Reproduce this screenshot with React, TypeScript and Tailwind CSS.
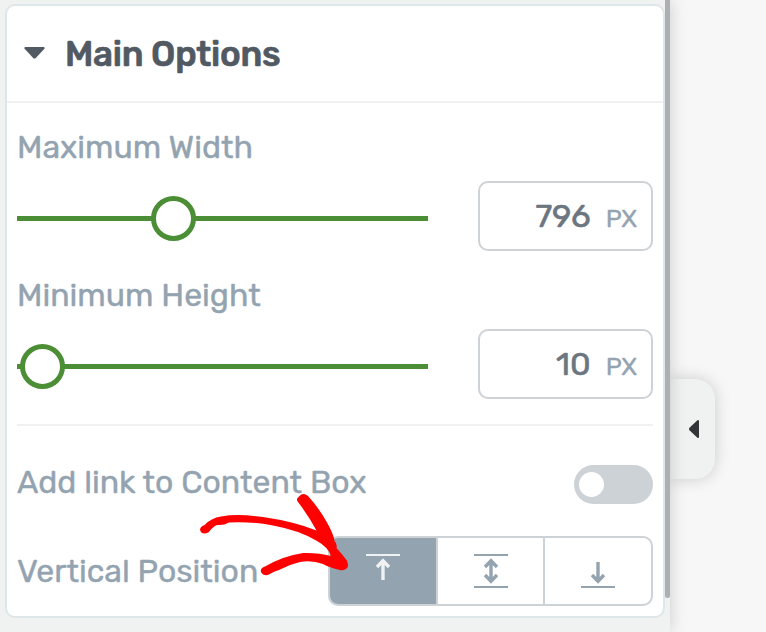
import { useState } from 'react'
import type { ReactNode } from 'react'

type VerticalPosition = 'top' | 'middle' | 'bottom'

interface SliderFieldProps {
  label: string
  value: number
  offset: number
}

function Label({ children }: { children: ReactNode }) {
  return (
    <span className="block whitespace-nowrap text-[32px] leading-10 text-[#93a3b0] [-webkit-text-stroke:0.4px_#93a3b0]">
      {children}
    </span>
  )
}

function SliderField({ label, value, offset }: SliderFieldProps) {
  return (
    <div className="pt-6">
      <Label>{label}</Label>
      <div className="mt-3.5 flex items-center justify-between">
        <div className="relative mt-1 flex h-[45px] w-[411px] items-center">
          <div className="h-[5px] w-full bg-[#4b8e36]" />
          <div
            className="absolute top-0 size-[45px] rounded-full border-[5px] border-[#4b8e36] bg-white"
            style={{ left: offset }}
          />
        </div>
        <div className="flex h-[70px] w-[175px] items-baseline justify-end rounded-[10px] border-2 border-[#cdd2d6] pr-[14px] leading-[66px]">
          <span className="mr-[15px] text-[32.5px] text-[#6b7681] [-webkit-text-stroke:0.6px_#6b7681]">{value}</span>
          <span className="text-[25px] text-[#93a3b0] [-webkit-text-stroke:0.3px_#93a3b0]">PX</span>
        </div>
      </div>
    </div>
  )
}

function PositionIcon({ position }: { position: VerticalPosition }) {
  return (
    <svg width="34" height="34" viewBox="0 0 34 34" fill="none" stroke="currentColor">
      {position !== 'bottom' && <path d="M0 1h34" strokeWidth="2" />}
      {position !== 'top' && <path d="M0 33h34" strokeWidth="2" />}
      {position === 'top' && <path d="M17 26V7M11 13l6-6.2 6 6.2" strokeWidth="3.4" />}
      {position === 'middle' && (
        <path d="M17 7v20M11 13l6-6.2 6 6.2M11 21l6 6.2 6-6.2" strokeWidth="3.4" />
      )}
      {position === 'bottom' && <path d="M17 8v19M11 21l6 6.2 6-6.2" strokeWidth="3.4" />}
    </svg>
  )
}

const positions: VerticalPosition[] = ['top', 'middle', 'bottom']

export default function App() {
  const [position, setPosition] = useState<VerticalPosition>('top')
  const [linked, setLinked] = useState(false)

  return (
    <div className="relative flex h-[632px] w-[766px] overflow-hidden bg-[#f7f7f7] font-[Rubik,Roboto,sans-serif]">
      <div className="relative z-10 flex w-[670px] shrink-0 bg-[#f0f2f1] pt-1 pl-[5px] shadow-[0_0_16px_rgba(0,0,0,0.18)]">
        <div className="h-[614px] w-[660px] rounded-[10px] border-2 border-[#dde6e8] bg-white">
          <div className="flex h-[97px] items-center border-b-2 border-[#f0f1f2] pl-[17px]">
            <svg className="-mt-px" width="21" height="12" viewBox="0 0 21 12" fill="#515962">
              <path d="M1.2 0h18.6q1.4.5.6 1.7l-8.6 9.2q-1.3 1.1-2.6 0L.6 1.7Q-.2.5 1.2 0Z" />
            </svg>
            <h2 className="mt-0.5 ml-5 whitespace-nowrap text-[35px] font-medium tracking-[-0.27px] text-[#515962] [-webkit-text-stroke:0.7px_#515962]">
              Main Options
            </h2>
          </div>

          <div className="px-2.5">
            <SliderField label="Maximum Width" value={796} offset={134} />
            <SliderField label="Minimum Height" value={10} offset={3} />

            <div className="mt-[25px] h-0.5 bg-[#f0f1f2]" />

            <div className="mt-9 flex justify-between">
              <Label>Add link to Content Box</Label>
              <button
                onClick={() => setLinked(!linked)}
                className={`mt-[3px] flex h-[39px] w-[79px] items-center rounded-full bg-[#cdd2d6] px-[5px] ${linked ? 'justify-end' : ''}`}
              >
                <span className="size-[25px] rounded-full bg-white" />
              </button>
            </div>

            <div className="mt-8 flex items-center justify-between">
              <Label>Vertical Position</Label>
              <div className="flex h-[70px] w-[325px] divide-x-2 divide-[#cdd2d6] overflow-hidden rounded-[10px] border-2 border-[#cdd2d6]">
                {positions.map((p) => (
                  <button
                    key={p}
                    onClick={() => setPosition(p)}
                    className={`flex flex-1 items-center justify-center ${
                      p === position ? 'bg-[#93a3b0] text-[#f0f2f1]' : 'text-[#93a3b0]'
                    }`}
                  >
                    <PositionIcon position={p} />
                  </button>
                ))}
              </div>
            </div>
          </div>
        </div>
        <div className="-mt-1 h-[598px] w-[5px] rounded-b-[3px] bg-[#adb0b2]" />
      </div>

      <div className="mt-[379px] flex h-[100px] w-[45px] items-center rounded-r-[20px] bg-[#f0f2f1] pl-[19px] shadow-[0_0_16px_rgba(0,0,0,0.18)]">
        <svg width="10" height="18" viewBox="0 0 10 18" fill="#333638">
          <path d="M10 .8v16.4q-.5 1.2-1.6.5L.5 10.2Q-.5 9 .5 7.8L8.4.3Q9.5-.4 10 .8Z" />
        </svg>
      </div>

      {/* hand-drawn pointer over the controls */}
      <svg
        className="pointer-events-none absolute top-[480px] left-[190px] z-20"
        width="170"
        height="110"
        viewBox="190 480 170 110"
        fill="#ff0000"
      >
        <path d="M200 530Q200 526.500 204.500 525Q211 518 221 516.500Q238 513.500 263 517Q294 521.500 316.500 530.500Q308 515 298 502Q295.500 499 299 496.500Q303 492 308 496Q319 508 327 522.500Q334 535 334.500 541Q337.500 544 336.500 548Q342 554 346.500 560Q349.500 566 346.500 568.500Q344 571 340 570Q329 567.500 323 564Q312 560 300 562Q289 564.500 279 570Q273 571.500 269 574.500Q264 577 261 572Q260 568 265 566.500Q283 556 303 553Q318 552.500 331 556Q328 547 317 541Q300 530.500 273 525.500Q248 521 229 522.500Q224 525.500 217 525Q213 526.500 209 532Q202 536 200 530Z" />
      </svg>
    </div>
  )
}
